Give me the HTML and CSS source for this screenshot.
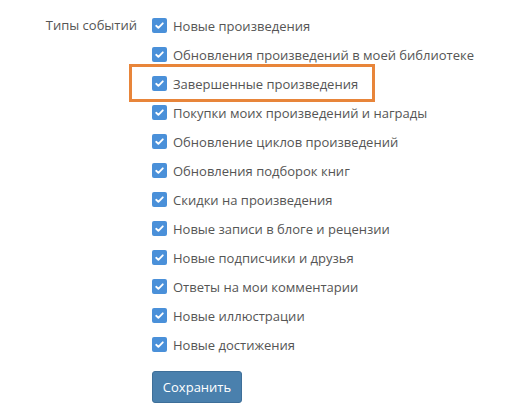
FILE: index.html
```html
<!DOCTYPE html>
<html lang="ru">
<head>
<meta charset="utf-8">
<link rel="stylesheet" href="styles.css">
</head>
<body>
<div class="form">
  <div class="label">Типы событий</div>
  <div class="controls">
    <ul class="list">
      <li class="item"><span class="cb"><svg viewBox="0 0 16 16"><path d="M4.5 8.3l2.3 2.2 4.7-4.8" /></svg></span>Новые произведения</li>
      <li class="item"><span class="cb"><svg viewBox="0 0 16 16"><path d="M4.5 8.3l2.3 2.2 4.7-4.8" /></svg></span>Обновления произведений в моей библиотеке</li>
      <li class="item highlighted"><span class="cb"><svg viewBox="0 0 16 16"><path d="M4.5 8.3l2.3 2.2 4.7-4.8" /></svg></span>Завершенные произведения</li>
      <li class="item"><span class="cb"><svg viewBox="0 0 16 16"><path d="M4.5 8.3l2.3 2.2 4.7-4.8" /></svg></span>Покупки моих произведений и награды</li>
      <li class="item"><span class="cb"><svg viewBox="0 0 16 16"><path d="M4.5 8.3l2.3 2.2 4.7-4.8" /></svg></span>Обновление циклов произведений</li>
      <li class="item"><span class="cb"><svg viewBox="0 0 16 16"><path d="M4.5 8.3l2.3 2.2 4.7-4.8" /></svg></span>Обновления подборок книг</li>
      <li class="item"><span class="cb"><svg viewBox="0 0 16 16"><path d="M4.5 8.3l2.3 2.2 4.7-4.8" /></svg></span>Скидки на произведения</li>
      <li class="item"><span class="cb"><svg viewBox="0 0 16 16"><path d="M4.5 8.3l2.3 2.2 4.7-4.8" /></svg></span>Новые записи в блоге и рецензии</li>
      <li class="item"><span class="cb"><svg viewBox="0 0 16 16"><path d="M4.5 8.3l2.3 2.2 4.7-4.8" /></svg></span>Новые подписчики и друзья</li>
      <li class="item"><span class="cb"><svg viewBox="0 0 16 16"><path d="M4.5 8.3l2.3 2.2 4.7-4.8" /></svg></span>Ответы на мои комментарии</li>
      <li class="item"><span class="cb"><svg viewBox="0 0 16 16"><path d="M4.5 8.3l2.3 2.2 4.7-4.8" /></svg></span>Новые иллюстрации</li>
      <li class="item"><span class="cb"><svg viewBox="0 0 16 16"><path d="M4.5 8.3l2.3 2.2 4.7-4.8" /></svg></span>Новые достижения</li>
    </ul>
    <button class="btn" type="button">Сохранить</button>
  </div>
</div>
</body>
</html>
```
FILE: styles.css
```css
html, body {
  margin: 0;
  padding: 0;
  background: #ffffff;
}
body {
  font-family: "Open Sans", "DejaVu Sans", sans-serif;
  font-size: 13px;
  color: #555555;
}
.form {
  display: flex;
  padding-top: 11px;
}
.label {
  width: 137px;
  text-align: right;
  height: 29px;
  line-height: 29px;
  color: #555555;
  box-sizing: border-box;
}
.controls {
  padding-left: 15px;
  display: flex;
  flex-direction: column;
  align-items: flex-start;
}
.list {
  list-style: none;
  margin: 0;
  padding: 0;
}
.item {
  position: relative;
  display: flex;
  align-items: center;
  height: 29px;
  white-space: nowrap;
  color: #555555;
}
.cb {
  width: 15px;
  height: 15px;
  border-radius: 2px;
  background: #4a90d9;
  margin-right: 6px;
  display: flex;
  align-items: center;
  justify-content: center;
  flex: none;
}
.cb svg {
  width: 15px;
  height: 15px;
  fill: none;
  stroke: #ffffff;
  stroke-width: 2;
  stroke-linecap: round;
  stroke-linejoin: round;
}
.highlighted::before {
  content: "";
  position: absolute;
  left: -23px;
  top: -5px;
  width: 240px;
  height: 32px;
  border: 3px solid #e8853a;
  pointer-events: none;
}
.btn {
  margin-top: 12px;
  width: 90px;
  height: 32px;
  border: 1px solid #3e6f99;
  border-radius: 3px;
  background: #4a80ad;
  color: #ffffff;
  font-family: "Open Sans", "DejaVu Sans", sans-serif;
  font-size: 13px;
  padding: 0;
}
```
